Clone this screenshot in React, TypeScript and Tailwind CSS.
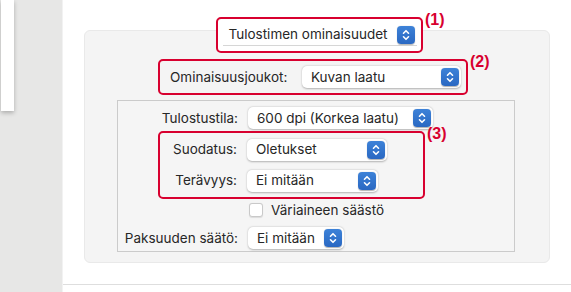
import React from 'react';

// macOS style popup button with a blue up/down stepper at the right edge
function Stepper() {
  return (
    <span className="flex h-[18px] w-[18px] shrink-0 items-center justify-center rounded-[4px] bg-gradient-to-b from-[#3d82d8] to-[#2a68c2] shadow-[0_0.5px_1px_rgba(0,0,0,0.3)]">
      <svg width="10" height="14" viewBox="0 0 10 14" fill="none" stroke="white" strokeWidth={1.6} strokeLinecap="round" strokeLinejoin="round">
        <path d="M2.5 5.2 5 2.7l2.5 2.5" />
        <path d="M2.5 8.8 5 11.3l2.5-2.5" />
      </svg>
    </span>
  );
}

function Popup({ value, width }: { value: string; width: string }) {
  return (
    <div
      className={`flex h-[22px] items-center justify-between rounded-[5px] bg-white pl-[9px] pr-[2px] shadow-[0_0.5px_2px_rgba(0,0,0,0.28)] ${width}`}
    >
      <span className="truncate">{value}</span>
      <Stepper />
    </div>
  );
}

function Marker({ label }: { label: string }) {
  return (
    <span
      className="absolute -top-[7px] left-full ml-[4px] text-[16px] font-bold leading-none text-[#d8002f]"
      style={{ fontFamily: '"Liberation Sans", Arial, sans-serif' }}
    >
      {label}
    </span>
  );
}

export default function App() {
  return (
    <div
      className="flex h-[292px] w-[571px] overflow-hidden bg-white text-[13.5px] text-[#272727]"
      style={{ fontFamily: 'Inter, "Liberation Sans", sans-serif' }}
    >
      {/* left sidebar strip */}
      <div className="flex w-[63px] shrink-0 flex-col border-r border-[#f2f2f2] bg-[#e7e7e6] pl-px">
        <div className="h-[111px] w-[13px] bg-white shadow-[0_2px_4px_rgba(0,0,0,0.25)]" />
      </div>

      <div className="flex flex-1 flex-col">
        <div className="flex flex-col px-[21px] pt-[17px]">
          {/* (1) */}
          <div className="relative z-10 -mb-[23px] flex justify-center">
            <div className="relative ml-[5px] flex h-[36px] w-[207px] items-center justify-center rounded-[5px] border-[2.5px] border-[#d8002f] bg-white">
              <div className="flex h-[22px] w-[194px] items-center justify-between border-b border-[#d6d6d6] pl-[6px] pr-[2px]">
                <span>Tulostimen ominaisuudet</span>
                <Stepper />
              </div>
              <Marker label="(1)" />
            </div>
          </div>

          {/* main panel */}
          <div className="flex h-[233px] flex-col rounded-[6px] border border-[#e9e9e9] bg-[#f4f4f4] pt-[28px]">
            {/* (2) */}
            <div className="relative ml-[73px] flex h-[36px] w-[310px] items-center rounded-[5px] border-[2.5px] border-[#d8002f] pl-[10px]">
              <span className="w-[132px]">Ominaisuusjoukot:</span>
              <Popup value="Kuvan laatu" width="w-[159px]" />
              <Marker label="(2)" />
            </div>

            <div className="ml-[32px] mt-[5px] flex h-[152px] w-[398px] flex-col border border-[#cbcbcb] bg-[#f5f5f5] pt-[6px]">
              <div className="flex items-center">
                <span className="w-[120px] text-right">Tulostustila:</span>
                <div className="ml-[10px]">
                  <Popup value="600 dpi (Korkea laatu)" width="w-[185px]" />
                </div>
              </div>

              {/* (3) */}
              <div className="relative ml-[40px] mt-[2px] flex h-[68px] w-[267px] flex-col justify-center gap-[9px] rounded-[5px] border-[2.5px] border-[#d8002f]">
                <div className="flex items-center">
                  <span className="w-[77px] text-right">Suodatus:</span>
                  <div className="ml-[10px]">
                    <Popup value="Oletukset" width="w-[140px]" />
                  </div>
                </div>
                <div className="flex items-center">
                  <span className="w-[77px] text-right">Terävyys:</span>
                  <div className="ml-[10px]">
                    <Popup value="Ei mitään" width="w-[131px]" />
                  </div>
                </div>
                <Marker label="(3)" />
              </div>

              <label className="ml-[131px] mt-[1px] flex items-center gap-[8px]">
                <span className="h-[14px] w-[14px] rounded-[3px] border border-[#c9c9c9] bg-white shadow-[0_0.5px_1px_rgba(0,0,0,0.1)]" />
                <span>Väriaineen säästö</span>
              </label>

              <div className="mt-[7px] flex items-center">
                <span className="w-[120px] text-right">Paksuuden säätö:</span>
                <div className="ml-[10px]">
                  <Popup value="Ei mitään" width="w-[96px]" />
                </div>
              </div>
            </div>
          </div>
        </div>

        <div className="mt-[21px] border-t border-[#dedede]" />
      </div>
    </div>
  );
}
